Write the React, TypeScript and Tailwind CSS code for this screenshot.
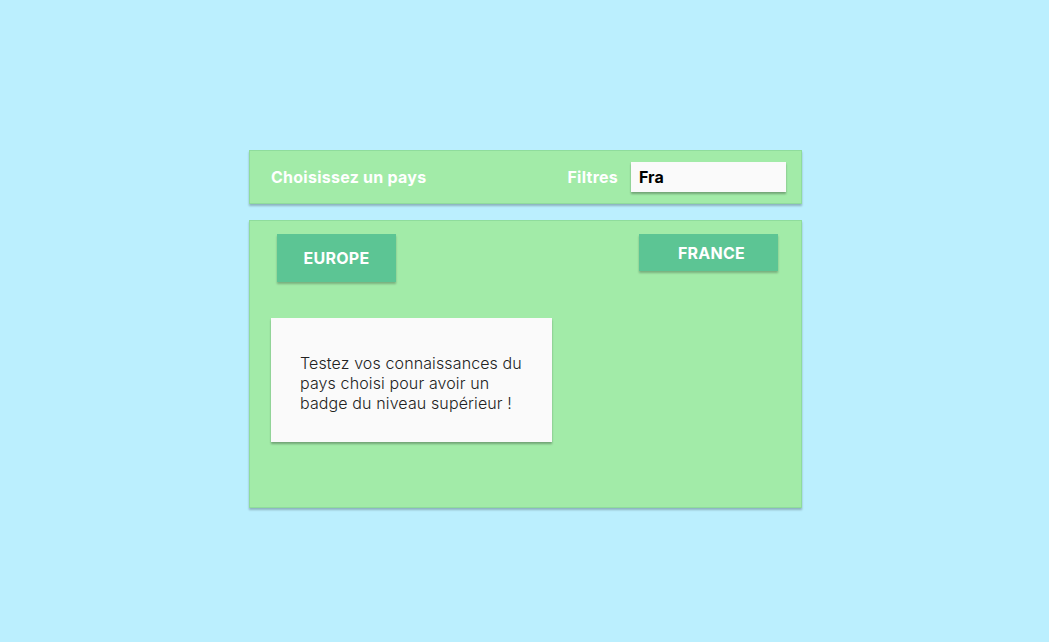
import React from "react";

const App = () => {
  return (
    <div className="min-h-[642px] w-full bg-[#bbeffe] pt-[150px] font-['Inter',_'Liberation_Sans',_sans-serif]">
      <div className="ml-[249px] w-[553px] flex flex-col gap-[16px]">
        {/* Header bar */}
        <div className="h-[54px] bg-[#a2eba8] border border-[#8fdc9c] shadow-[0_2px_2px_rgba(0,0,0,0.25)] flex items-center pl-[21px] pr-[15px]">
          <span className="text-white font-bold text-[16px] tracking-[0.25px]">Choisissez un pays</span>
          <span className="ml-auto text-white font-bold text-[16px] tracking-[0.25px]">Filtres</span>
          <div className="ml-[13px] w-[155px] h-[30px] bg-[#fafafa] shadow-[0_2px_2px_rgba(0,0,0,0.3)] flex items-center px-[8px]">
            <span className="text-black font-bold text-[16px]">Fra</span>
          </div>
        </div>

        {/* Main panel */}
        <div className="h-[288px] bg-[#a2eba8] border border-[#8fdc9c] shadow-[0_2px_2px_rgba(0,0,0,0.25)] flex flex-col">
          <div className="flex items-start justify-between pl-[27px] pr-[23px] pt-[13px]">
            <button className="w-[119px] h-[48px] bg-[#5cc594] text-white font-bold text-[16px] tracking-[0.25px] shadow-[0_2px_2px_rgba(0,0,0,0.25)]">
              EUROPE
            </button>
            <button className="w-[139px] h-[37px] pl-[6px] bg-[#5cc594] text-white font-bold text-[16px] tracking-[0.25px] shadow-[0_2px_2px_rgba(0,0,0,0.25)]">
              FRANCE
            </button>
          </div>
          <div className="ml-[21px] mt-[36px] w-[281px] h-[124px] bg-[#fafafa] shadow-[0_2px_2px_rgba(0,0,0,0.3)] flex items-center pl-[29px] pr-[18px] pt-[6px]">
            <p className="text-[#222222] font-light text-[16px] leading-[20px] tracking-[0.12px]">
              Testez vos connaissances du pays choisi pour avoir un badge du niveau supérieur !
            </p>
          </div>
        </div>
      </div>
    </div>
  );
};

export default App;
